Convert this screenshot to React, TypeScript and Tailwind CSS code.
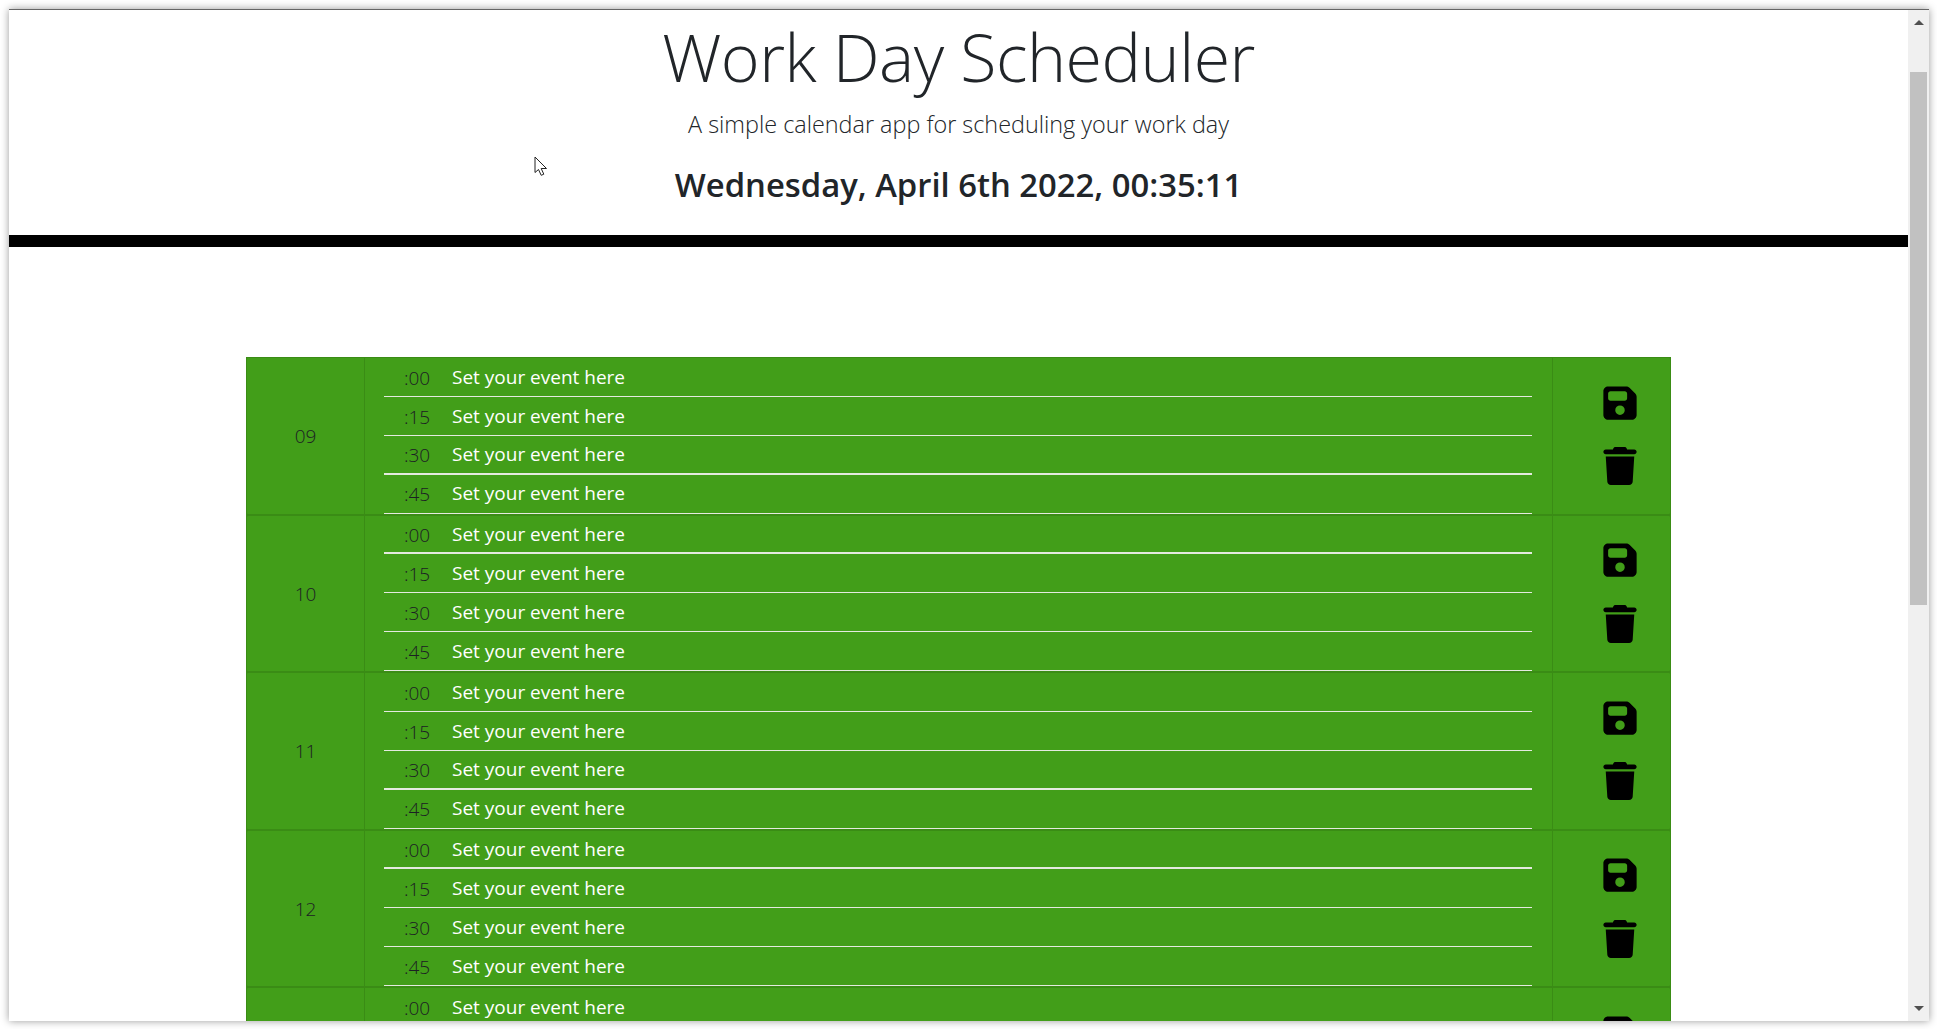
import { FaFloppyDisk, FaTrash } from "react-icons/fa6";

const fontFamily = "font-['Open_Sans',sans-serif]";

// the 2px lines in the reference come from fractional scaling
const hours = [
  { label: "09", thick: [false, false, true, false] },
  { label: "10", thick: [true, false, false, false] },
  { label: "11", thick: [false, false, true, false] },
  { label: "12", thick: [true, false, false, false] },
  { label: "13", thick: [false, false, false, false] },
];
const minutes = [":00", ":15", ":30", ":45"];

function Slot({ minute, thick }: { minute: string; thick: boolean }) {
  return (
    <div
      className={`flex h-[38.9px] items-center ${
        thick ? "border-b-2" : "border-b"
      } border-[#e4eadf]`}
    >
      <span className="mt-[2px] ml-5 w-[48px] text-[19px] font-light text-[#1c2024]">
        {minute}
      </span>
      <span className="text-[19px] text-white">Set your event here</span>
    </div>
  );
}

function HourBlock({ label, thick }: { label: string; thick: boolean[] }) {
  return (
    <section className="flex h-[157.5px] shrink-0 rounded-[2px] border border-[#3a8c15] bg-[#429e19]">
      <div className="flex w-[118px] shrink-0 items-center justify-center border-r border-[#3a8c15] pt-px text-[19px] font-light text-[#1c2024]">
        {label}
      </div>
      <div className="flex-1 pr-5 pl-[19px]">
        {minutes.map((minute, i) => (
          <Slot key={minute} minute={minute} thick={thick[i]} />
        ))}
      </div>
      <div className="flex w-[118px] shrink-0 flex-col items-center gap-[25.5px] border-l border-[#3a8c15] pt-[25.5px] pl-[17px] text-black">
        <FaFloppyDisk className="size-[38px]" />
        <FaTrash className="size-[38px]" />
      </div>
    </section>
  );
}

function Scrollbar() {
  return (
    <aside className="flex w-[21px] shrink-0 flex-col items-center bg-[#f0f0f0]">
      <div className="mt-[10px] size-0 border-x-[5px] border-b-[5px] border-x-transparent border-b-[#505050]" />
      <div className="mt-[47px] h-[533px] w-[17px] bg-[#c1c1c1]" />
      <div className="mt-auto mb-[10px] size-0 border-x-[5px] border-t-[5px] border-x-transparent border-t-[#505050]" />
    </aside>
  );
}

export default function App() {
  return (
    <div className={`h-screen w-full bg-white pt-[9px] pr-2 pb-2 pl-[9px] ${fontFamily}`}>
      <div className="relative flex h-full overflow-hidden border-t border-[#666666] bg-white shadow-[0_0_8px_rgba(0,0,0,0.4)]">
        <main className="min-w-0 flex-1 overflow-hidden">
          <header className="h-[225px] text-center text-[#212529]">
            <h1 className="pt-[7px] text-[66.3px] leading-[1.2] font-light tracking-[-0.5px]">
              Work Day Scheduler
            </h1>
            <p className="mt-[10px] text-[23.4px] leading-[1.5] font-light">
              A simple calendar app for scheduling your work day
            </p>
            <p className="mt-[23px] text-[32.8px] leading-[1.2] font-semibold">
              Wednesday, April 6th 2022, 00:35:11
            </p>
          </header>
          <div className="h-3 bg-black" />
          <div className="mt-[110px] ml-[237px] w-[1425px] bg-[#3a8c15]">
            {hours.map((hour) => (
              <HourBlock key={hour.label} label={hour.label} thick={hour.thick} />
            ))}
          </div>
        </main>
        <Scrollbar />
        <svg
          className="absolute top-[146px] left-[525px]"
          width="14"
          height="21"
          viewBox="0 0 14 21"
        >
          <path
            d="M1 1v15.5l3.5-3 2.7 5.8 2.6-1.1-2.6-5.7H12.5z"
            fill="white"
            stroke="#222"
            strokeWidth="1"
          />
        </svg>
      </div>
    </div>
  );
}
